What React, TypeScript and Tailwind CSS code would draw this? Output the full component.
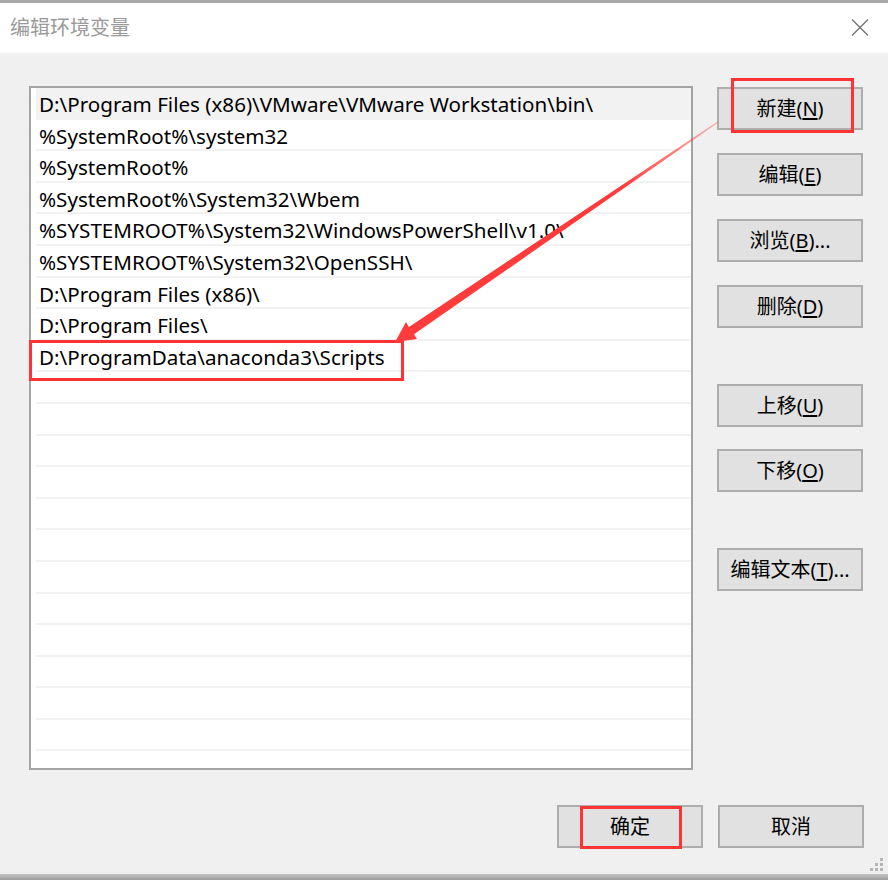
import React from 'react';

const paths = [
  'D:\\Program Files (x86)\\VMware\\VMware Workstation\\bin\\',
  '%SystemRoot%\\system32',
  '%SystemRoot%',
  '%SystemRoot%\\System32\\Wbem',
  '%SYSTEMROOT%\\System32\\WindowsPowerShell\\v1.0\\',
  '%SYSTEMROOT%\\System32\\OpenSSH\\',
  'D:\\Program Files (x86)\\',
  'D:\\Program Files\\',
  'D:\\ProgramData\\anaconda3\\Scripts',
];

const rows = [...paths, ...Array(13).fill('')];

const Btn = ({ label, k, tail = '', className = '' }: { label: string; k: string; tail?: string; className?: string }) => (
  <button className={`w-[146px] h-[43px] shrink-0 border-2 border-[#adadad] bg-[#e1e1e1] text-[20px] text-black flex items-center justify-center ${className}`}>
    {label}(<span className="underline underline-offset-2">{k}</span>){tail}
  </button>
);

const App = () => {
  return (
    <div
      className="relative w-[888px] h-[880px] flex flex-col bg-[#f0f0f0] overflow-hidden"
      style={{ fontFamily: '"Noto Sans", "Noto Sans CJK SC", sans-serif' }}
    >
      <div className="h-[3px] bg-[#a8a8a8]" />
      <div className="h-[50px] bg-white flex items-center justify-between pl-[10px] pr-[19px]">
        <span className="text-[20px] text-[#9a9a9a] mb-[2px]" style={{ fontFamily: '"Noto Sans CJK SC", sans-serif' }}>
          编辑环境变量
        </span>
        <svg width="18" height="17" viewBox="0 0 18 17" className="mb-[2px]">
          <path d="M1 0.5L17 16.5M17 0.5L1 16.5" stroke="#707070" strokeWidth="1.3" />
        </svg>
      </div>

      <div className="relative flex-1 flex flex-col">
        <div className="flex pl-[29px] pt-[33px]">
          <div className="w-[664px] h-[684px] border-2 border-[#a3a3a3] bg-white pl-[5px] overflow-hidden">
            {rows.map((p, i) => (
              <div
                key={i}
                className={`h-[31.6px] border-b-2 border-[#f2f2f2] pl-[3px] pt-[3px] flex items-center text-[20.6px] text-black whitespace-nowrap leading-none ${i === 0 ? 'bg-[#f2f2f2]' : ''}`}
              >
                {p}
              </div>
            ))}
          </div>

          <div className="flex flex-col ml-[24px] pt-[1px]">
            <Btn label="新建" k="N" />
            <Btn label="编辑" k="E" className="mt-[23px]" />
            <Btn label="浏览" k="B" tail="..." className="mt-[23px]" />
            <Btn label="删除" k="D" className="mt-[23px]" />
            <Btn label="上移" k="U" className="mt-[56px]" />
            <Btn label="下移" k="O" className="mt-[22px]" />
            <Btn label="编辑文本" k="T" tail="..." className="mt-[56px]" />
          </div>
        </div>

        <div className="flex justify-end gap-[15px] pr-[24px] mt-[35px]">
          <button className="w-[146px] h-[43px] border-2 border-[#adadad] bg-[#e1e1e1] text-[20px] text-black">确定</button>
          <button className="w-[146px] h-[43px] border-2 border-[#adadad] bg-[#e1e1e1] text-[20px] text-black">取消</button>
        </div>

        <svg width="16" height="14" viewBox="0 0 16 14" className="absolute right-[3px] bottom-[2px]">
          <g fill="#b5b5b5">
            <rect x="11" y="0" width="3" height="3" />
            <rect x="6" y="5" width="3" height="3" />
            <rect x="11" y="5" width="3" height="3" />
            <rect x="1" y="10" width="3" height="3" />
            <rect x="6" y="10" width="3" height="3" />
            <rect x="11" y="10" width="3" height="3" />
          </g>
        </svg>
      </div>
      <div className="h-[6px] bg-gradient-to-b from-[#c4c4c4] to-[#9e9e9e]" />

      {/* annotations */}
      <div className="absolute left-[731px] top-[78px] w-[123px] h-[55px] border-[3px] border-[#ff3333]" />
      <div className="absolute left-[29px] top-[340px] w-[375px] h-[41px] border-[3px] border-[#ff3333]" />
      <div className="absolute left-[580px] top-[806px] w-[102px] h-[43px] border-[3px] border-[#ff3333]" />
      <svg className="absolute left-0 top-0 pointer-events-none" width="888" height="880" viewBox="0 0 888 880">
        <defs>
          <linearGradient id="shaft" x1="718" y1="122" x2="400" y2="340" gradientUnits="userSpaceOnUse">
            <stop offset="0" stopColor="#ff3b3b" stopOpacity="0.35" />
            <stop offset="0.3" stopColor="#ff3b3b" stopOpacity="1" />
            <stop offset="1" stopColor="#ff3b3b" stopOpacity="1" />
          </linearGradient>
        </defs>
        <polygon
          points="395,342 417,339 414,334.3 718.4,122.5 717.6,121.5 408.9,327 406,322"
          fill="url(#shaft)"
        />
      </svg>
    </div>
  );
};

export default App;
